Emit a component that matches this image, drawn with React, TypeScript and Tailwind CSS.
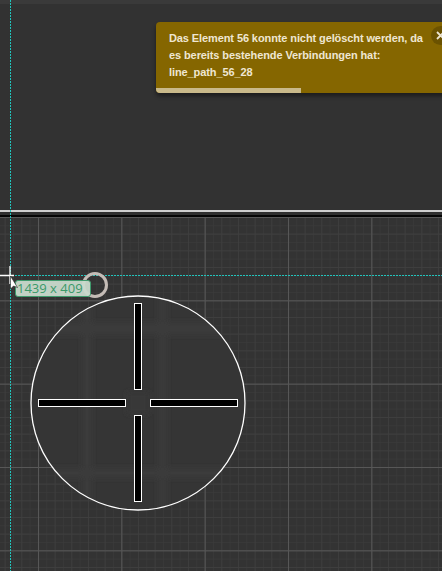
import React from 'react';

function GridCanvas() {
  return (
    <svg width="442" height="354" viewBox="0 0 442 354" className="block">
      <defs>
        <pattern id="minor" width="8.333" height="8.333" x="38" y="0" patternUnits="userSpaceOnUse">
          <path d="M 0 0 L 8.333 0 M 0 0 L 0 8.333" stroke="#3a3a3a" strokeWidth="1.4" fill="none" />
        </pattern>
        <pattern id="mid" width="16.667" height="16.667" x="38" y="0" patternUnits="userSpaceOnUse">
          <path d="M 0 0 L 16.667 0 M 0 0 L 0 16.667" stroke="#3f3f3f" strokeWidth="1.4" fill="none" />
        </pattern>
        <pattern id="major" width="83.333" height="83.333" x="38" y="0" patternUnits="userSpaceOnUse">
          <path d="M 0 0.5 L 83.333 0.5 M 0.5 0 L 0.5 83.333" stroke="#575757" strokeWidth="1" fill="none" />
        </pattern>
        <clipPath id="disc">
          <circle cx="138" cy="186" r="107" />
        </clipPath>
        <filter id="soft" x="-20%" y="-20%" width="140%" height="140%">
          <feGaussianBlur stdDeviation="2.5" />
        </filter>
      </defs>
      <rect width="442" height="354" fill="#333333" />
      <rect width="442" height="354" fill="url(#minor)" />
      <rect width="442" height="354" fill="url(#mid)" />
      <rect width="442" height="354" fill="url(#major)" />

      {/* selected circle element */}
      <g clipPath="url(#disc)">
        <rect x="20" y="70" width="240" height="240" fill="#353535" />
        <g filter="url(#soft)" fill="#3b3b3b">
          <rect x="82" y="70" width="10" height="240" />
          <rect x="158" y="70" width="9" height="240" />
          <rect x="20" y="105" width="240" height="13" />
          <rect x="20" y="251" width="240" height="10" />
          <rect x="127" y="175" width="22" height="22" fill="#393939" />
        </g>
      </g>
      <circle cx="138" cy="186" r="107" fill="none" stroke="#ffffff" strokeWidth="1.3" />

      {/* crosshair bars */}
      <g fill="#000000" stroke="#ffffff" strokeWidth="1">
        <rect x="134.5" y="86.5" width="7" height="86" />
        <rect x="134.5" y="198.5" width="7" height="86" />
        <rect x="38.5" y="182.5" width="87" height="7" />
        <rect x="150.5" y="182.5" width="87" height="7" />
      </g>
    </svg>
  );
}

export default function App() {
  return (
    <div className="relative w-[442px] h-[571px] overflow-hidden bg-[#333333] font-['Liberation_Sans',Arial,sans-serif]">
      {/* Top panel */}
      <div className="h-[210px] flex flex-col">
        <div className="h-[4px] bg-[#3a3a3a]" />
        <div className="flex-1 bg-[#323232]" />
      </div>

      {/* Splitter */}
      <div className="h-[2px] bg-[#cfcfcf]" />
      <div className="h-[3px] bg-[#2f2f2f]" />
      <div className="h-[2px] bg-[#050505]" />

      {/* Drawing canvas */}
      <div className="relative">
        <GridCanvas />
      </div>

      {/* Guide lines */}
      <div className="absolute left-[10px] top-0 h-full w-px bg-[repeating-linear-gradient(to_bottom,#22c4bc_0px,#22c4bc_2px,transparent_2px,transparent_3px)]" />
      <div className="absolute left-0 top-[275px] w-full h-px bg-[repeating-linear-gradient(to_right,#22c4bc_0px,#22c4bc_2px,transparent_2px,transparent_3px)]" />

      {/* Ring handle */}
      <div className="absolute left-[82px] top-[272px] w-[26px] h-[26px] rounded-full border-[3px] border-[#c4bcb6]" />

      {/* Size tooltip */}
      <div className="absolute left-[15px] top-[280px] h-[17px] w-[76px] rounded-[3px] border border-[#3f9a6c] bg-[#c9dacc]/95 flex items-center pl-[1px] font-['Open_Sans',sans-serif] text-[13px] leading-none text-[#3a9a6a]">
        1439 x 409
      </div>

      {/* Mouse cursor */}
      <svg className="absolute left-0 top-[264px]" width="24" height="30" viewBox="0 0 24 30">
        <path d="M0 11.5 H14 M10 2 V20" stroke="#ffffff" strokeWidth="1.3" />
        <path d="M10.5 12 L10.5 25 L13.5 22 L17.5 23.5 Z" fill="#ffffff" stroke="#202020" strokeWidth="0.6" />
      </svg>

      {/* Error toast */}
      <div className="absolute left-[156px] top-[22px] w-[300px] rounded-[4px] bg-[#856600] shadow-[0_3px_4px_rgba(0,0,0,0.45)] overflow-hidden">
        <div className="pl-[13px] pr-[40px] pt-[8px] pb-[7px] text-[11px] font-bold leading-[17px] tracking-[-0.1px] text-[#efe6d2]">
          <div className="whitespace-nowrap">Das Element 56 konnte nicht gelöscht werden, da</div>
          <div className="whitespace-nowrap">es bereits bestehende Verbindungen hat:</div>
          <div className="whitespace-nowrap">line_path_56_28</div>
        </div>
        <div className="h-[5px] w-[145px] bg-[#c9b98a]" />
        <button className="absolute left-[275px] top-[4px] w-[19px] h-[19px] rounded-full bg-[#6b5200] flex items-center justify-center text-[#ece4d0]">
          <svg width="9" height="9" viewBox="0 0 9 9">
            <path d="M1 1 L8 8 M8 1 L1 8" stroke="currentColor" strokeWidth="1.8" />
          </svg>
        </button>
      </div>
    </div>
  );
}
